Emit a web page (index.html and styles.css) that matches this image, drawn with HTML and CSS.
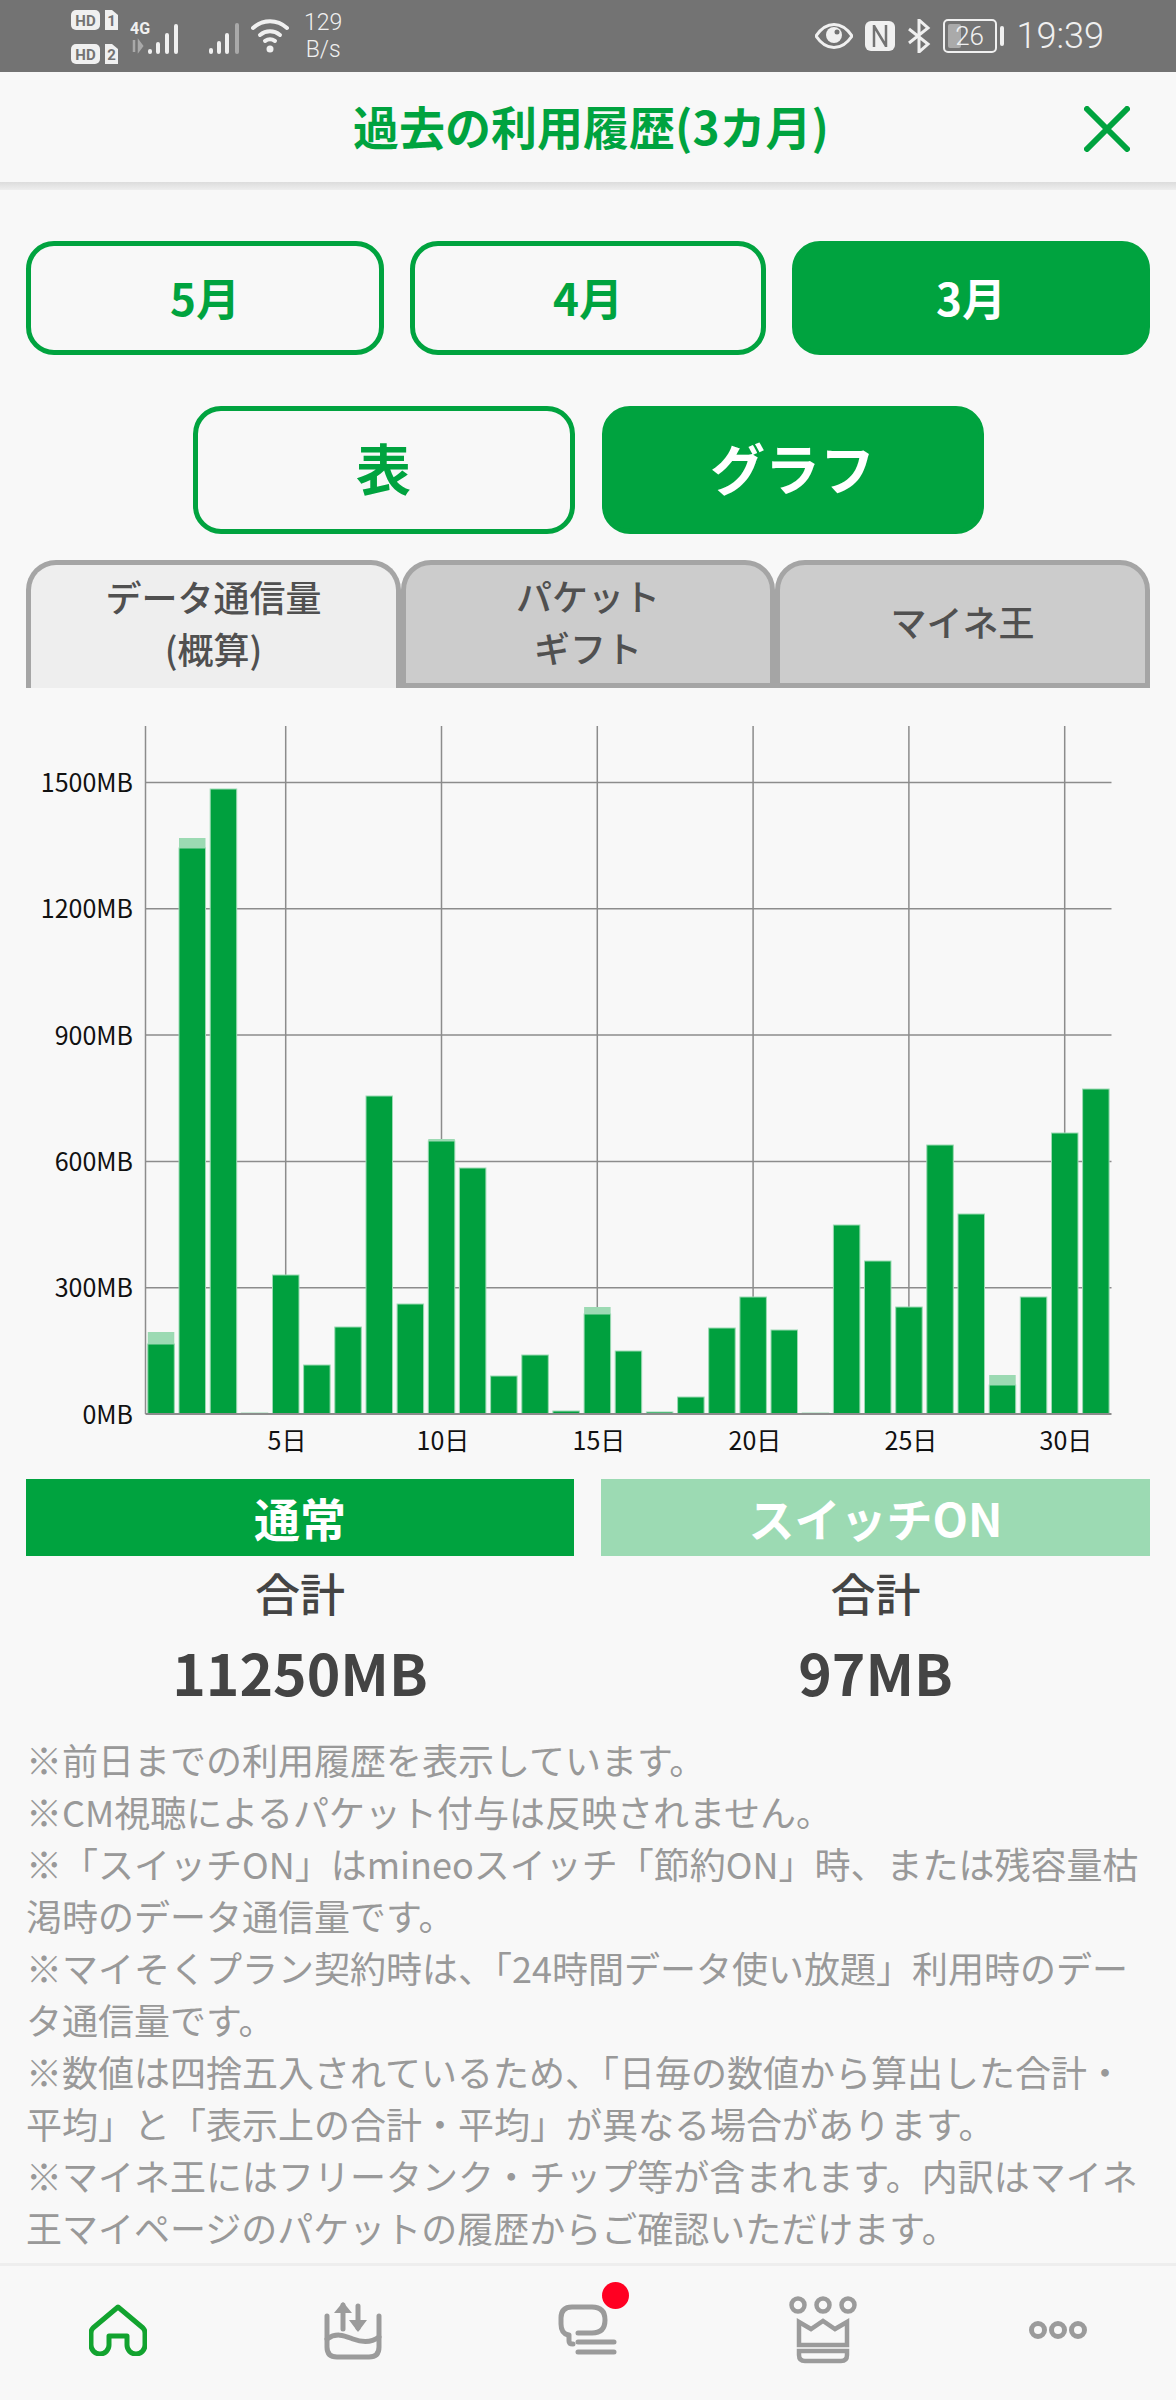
FILE: index.html
```html
<!DOCTYPE html>
<html lang="ja">
<head>
    <meta charset="UTF-8">
    <meta name="viewport" content="width=device-width, initial-scale=1.0">
    <title>過去の利用履歴(3カ月)</title>
    <link rel="stylesheet" href="styles.css">
</head>
<body>
    <div class="status-bar">
        <div class="status-left">
            <svg class="sim-icon" width="50" height="56" viewBox="0 0 50 56">
                <rect x="1" y="2" width="29" height="20" rx="5" fill="#f0f0f0"/>
                <path d="M35 2h7l6 5v15h-13z" fill="#f0f0f0"/>
                <text x="15.500" y="18" class="sim-text">HD</text>
                <text x="41.500" y="18" class="sim-text">1</text>
                <rect x="1" y="36" width="29" height="20" rx="5" fill="#f0f0f0"/>
                <path d="M35 36h7l6 5v15h-13z" fill="#f0f0f0"/>
                <text x="15.500" y="52" class="sim-text">HD</text>
                <text x="41.500" y="52" class="sim-text">2</text>
            </svg>
            <svg class="signal-icon" width="52" height="40" viewBox="0 0 52 40">
                <text x="0" y="18" class="net-text">4G</text>
                <path d="M4 24v12M9 26v8l3-4z" stroke="#a9a9a9" stroke-width="2.500" fill="none"/>
                <g stroke="#f0f0f0" stroke-width="4" stroke-linecap="round">
                    <path d="M20 36v-1M28 36v-8M37 36v-17M46 36v-26"/>
                </g>
            </svg>
            <svg class="signal-two" width="34" height="40" viewBox="0 0 34 40">
                <g stroke="#f0f0f0" stroke-width="4" stroke-linecap="round">
                    <path d="M3 36v-2M11 36v-9M19 36v-17"/>
                </g>
                <path d="M29 36v-27" stroke="#a9a9a9" stroke-width="4" stroke-linecap="round"/>
            </svg>
            <svg class="wifi-icon" width="38" height="36" viewBox="0 0 38 36">
                <g fill="none" stroke="#f0f0f0" stroke-width="4" stroke-linecap="round">
                    <path d="M2 10c10-9 24-9 34 0"/>
                    <path d="M9 17c6-5 14-5 20 0"/>
                    <path d="M14 23c3-2 7-2 10 0"/>
                </g>
                <circle cx="19" cy="31" r="3.500" fill="#f0f0f0"/>
            </svg>
            <div class="net-speed">129<br>B/s</div>
        </div>
        <div class="status-right">
            <svg width="38" height="26" viewBox="0 0 38 26">
                <path d="M1 13C7 4 13 1.500 19 1.500S31 4 37 13c-6 9-12 11.500-18 11.500S7 22 1 13z" fill="none" stroke="#f0f0f0" stroke-width="3"/>
                <circle cx="19" cy="12" r="8" fill="#f0f0f0"/>
                <circle cx="22" cy="9" r="2.500" fill="#737373"/>
            </svg>
            <svg width="30" height="32" viewBox="0 0 30 32">
                <rect x="0" y="1" width="30" height="30" rx="6" fill="#f0f0f0"/>
                <path d="M9 5v22M21 5v22M9 6l12 20" stroke="#737373" stroke-width="2.500" fill="none"/>
            </svg>
            <svg width="24" height="34" viewBox="0 0 24 34">
                <path d="M2 10l19 15-9 8V1l9 8L2 24" fill="none" stroke="#f0f0f0" stroke-width="3"/>
            </svg>
            <div class="battery">
                <div class="battery-body"><span class="battery-level"></span><span class="battery-num">26</span></div>
                <span class="battery-nub"></span>
            </div>
            <span class="clock">19:39</span>
        </div>
    </div>

    <header class="page-header">
        <h1>過去の利用履歴(3カ月)</h1>
        <svg class="close-icon" width="46" height="46" viewBox="0 0 46 46">
            <path d="M3 3l40 40M43 3L3 43" stroke="#00a33f" stroke-width="6" stroke-linecap="round" fill="none"/>
        </svg>
    </header>

    <main class="content">
        <div class="month-row">
            <button type="button" class="pill">5月</button>
            <button type="button" class="pill">4月</button>
            <button type="button" class="pill active">3月</button>
        </div>

        <div class="view-row">
            <button type="button" class="pill">表</button>
            <button type="button" class="pill active">グラフ</button>
        </div>

        <div class="tabs">
            <div class="tab current">データ通信量<br>(概算)</div>
            <div class="tab">パケット<br>ギフト</div>
            <div class="tab">マイネ王</div>
        </div>

        <svg class="chart" width="1176" height="740" viewBox="0 0 1176 740">
            <g class="grid">
                <path d="M145.500 6V694M285.700 6V694M441.500 6V694M597.300 6V694M753.100 6V694M908.900 6V694M1064.700 6V694"/>
                <path d="M145.500 62.500H1111.500M145.500 188.800H1111.500M145.500 315.100H1111.500M145.500 441.400H1111.500M145.500 567.700H1111.500"/>
            </g>
            <g class="bars-on">
                <rect x="147.800" y="612" width="26.500" height="82"/>
                <rect x="179" y="118" width="26.500" height="576"/>
                <rect x="428.300" y="419" width="26.500" height="275"/>
                <rect x="584.100" y="587" width="26.500" height="107"/>
                <rect x="989.200" y="655" width="26.500" height="39"/>
            </g>
            <g class="bars">
                <rect x="147.800" y="624" width="26.500" height="70"/>
                <rect x="179" y="128" width="26.500" height="566"/>
                <rect x="210.200" y="69" width="26.500" height="625"/>
                <rect x="241.300" y="693" width="26.500" height="1"/>
                <rect x="272.500" y="555" width="26.500" height="139"/>
                <rect x="303.600" y="645" width="26.500" height="49"/>
                <rect x="334.800" y="607" width="26.500" height="87"/>
                <rect x="366" y="376" width="26.500" height="318"/>
                <rect x="397.100" y="584" width="26.500" height="110"/>
                <rect x="428.300" y="421" width="26.500" height="273"/>
                <rect x="459.400" y="448" width="26.500" height="246"/>
                <rect x="490.600" y="656" width="26.500" height="38"/>
                <rect x="521.800" y="635" width="26.500" height="59"/>
                <rect x="552.900" y="691" width="26.500" height="3"/>
                <rect x="584.100" y="594" width="26.500" height="100"/>
                <rect x="615.200" y="631" width="26.500" height="63"/>
                <rect x="646.400" y="692" width="26.500" height="2"/>
                <rect x="677.600" y="677" width="26.500" height="17"/>
                <rect x="708.700" y="608" width="26.500" height="86"/>
                <rect x="739.900" y="577" width="26.500" height="117"/>
                <rect x="771" y="610" width="26.500" height="84"/>
                <rect x="802.200" y="693" width="26.500" height="1"/>
                <rect x="833.400" y="505" width="26.500" height="189"/>
                <rect x="864.500" y="541" width="26.500" height="153"/>
                <rect x="895.700" y="587" width="26.500" height="107"/>
                <rect x="926.800" y="425" width="26.500" height="269"/>
                <rect x="958" y="494" width="26.500" height="200"/>
                <rect x="989.200" y="665" width="26.500" height="29"/>
                <rect x="1020.300" y="577" width="26.500" height="117"/>
                <rect x="1051.500" y="413" width="26.500" height="281"/>
                <rect x="1082.600" y="369" width="26.500" height="325"/>
            </g>
            <path class="axis" d="M145.500 694H1111.500"/>
            <g class="y-labels">
                <text x="133" y="72">1500MB</text>
                <text x="133" y="198">1200MB</text>
                <text x="133" y="325">900MB</text>
                <text x="133" y="451">600MB</text>
                <text x="133" y="577">300MB</text>
                <text x="133" y="704">0MB</text>
            </g>
            <g class="x-labels">
                <text x="287" y="730">5日</text>
                <text x="443" y="730">10日</text>
                <text x="599" y="730">15日</text>
                <text x="755" y="730">20日</text>
                <text x="911" y="730">25日</text>
                <text x="1066" y="730">30日</text>
            </g>
        </svg>

        <div class="totals">
            <div class="total">
                <div class="total-label">通常</div>
                <div class="total-name">合計</div>
                <div class="total-value">11250MB</div>
            </div>
            <div class="total switch-on">
                <div class="total-label">スイッチON</div>
                <div class="total-name">合計</div>
                <div class="total-value">97MB</div>
            </div>
        </div>

        <p class="notes">
            ※前日までの利用履歴を表示しています。<br>
            ※CM視聴によるパケット付与は反映されません。<br>
            ※「スイッチON」はmineoスイッチ「節約ON」時、または残容量枯渇時のデータ通信量です。<br>
            ※マイそくプラン契約時は、「24時間データ使い放題」利用時のデータ通信量です。<br>
            ※数値は四捨五入されているため、「日毎の数値から算出した合計・平均」と「表示上の合計・平均」が異なる場合があります。<br>
            ※マイネ王にはフリータンク・チップ等が含まれます。内訳はマイネ王マイページのパケットの履歴からご確認いただけます。
        </p>
    </main>

    <nav class="bottom-nav">
        <a class="nav-item">
            <svg width="58" height="52" viewBox="0 0 58 52">
                <path d="M29 3L54 24Q56 26 56 29V41A9 9 0 0 1 38 41V32H20V41A9 9 0 0 1 2 41V29Q2 26 4 24Z" fill="none" stroke="#12a32f" stroke-width="5" stroke-linejoin="round"/>
            </svg>
        </a>
        <a class="nav-item">
            <svg width="58" height="60" viewBox="0 0 58 60">
                <g fill="none" stroke="#9b9b9b" stroke-width="5" stroke-linecap="round">
                    <path d="M3 16V47Q3 57 13 57H45Q55 57 55 47V16"/>
                    <path d="M3 39C13 32 21 36 29 39S47 43 55 37"/>
                    <path d="M19 29V5M34 6V28"/>
                </g>
                <path d="M10 13L19 2L28 13ZM25 20H43L34 32Z" fill="#9b9b9b"/>
            </svg>
        </a>
        <a class="nav-item chat">
            <svg width="60" height="52" viewBox="0 0 60 52">
                <g fill="none" stroke="#9b9b9b" stroke-width="5" stroke-linecap="round">
                    <path d="M10 31Q3 29 3 20V14Q3 3 14 3H34Q47 3 47 16Q47 29 34 29H20"/>
                    <path d="M20 38H56M20 48H56"/>
                    <path d="M11 31V37Q11 40 15 40"/>
                </g>
            </svg>
            <span class="badge"></span>
        </a>
        <a class="nav-item">
            <svg width="68" height="68" viewBox="0 0 68 68">
                <g fill="none" stroke="#9b9b9b" stroke-width="4.500">
                    <circle cx="9" cy="9" r="6.500"/>
                    <circle cx="34" cy="9" r="6.500"/>
                    <circle cx="59" cy="9" r="6.500"/>
                    <path d="M10 26L22 33L34 25L46 33L58 26V49H10Z"/>
                    <path d="M10 55H58V59Q58 65 52 65H16Q10 65 10 59Z"/>
                </g>
            </svg>
        </a>
        <a class="nav-item">
            <svg width="60" height="20" viewBox="0 0 60 20">
                <g fill="none" stroke="#9b9b9b" stroke-width="5">
                    <circle cx="10" cy="10" r="6.500"/>
                    <circle cx="30" cy="10" r="6.500"/>
                    <circle cx="50" cy="10" r="6.500"/>
                </g>
            </svg>
        </a>
    </nav>
</body>
</html>
```

FILE: styles.css
```css
* {
    box-sizing: border-box;
}

body {
    font-family: "Noto Sans CJK JP", "Noto Sans", sans-serif;
    background-color: #f8f8f8;
    color: #444;
    width: 1176px;
    height: 2400px;
    margin: 0;
    display: flex;
    flex-direction: column;
    overflow: hidden;
}

/* status bar */
.status-bar {
    height: 72px;
    background-color: #737373;
    color: #f0f0f0;
    display: flex;
    justify-content: space-between;
    align-items: center;
    padding: 0 72px 0 70px;
    flex-shrink: 0;
}

.status-left, .status-right {
    display: flex;
    align-items: center;
}

.sim-text {
    font-family: "Roboto", sans-serif;
    font-size: 15px;
    font-weight: 700;
    fill: #737373;
    text-anchor: middle;
}

.net-text {
    font-family: "Roboto", sans-serif;
    font-size: 16px;
    font-weight: 700;
    fill: #f0f0f0;
}

.sim-icon {
    margin-right: 10px;
}

.signal-two {
    margin-left: 26px;
}

.wifi-icon {
    margin-left: 9px;
}

.net-speed {
    font-family: "Roboto", sans-serif;
    font-size: 23px;
    font-weight: 300;
    line-height: 27px;
    text-align: center;
    margin-left: 15px;
}

.status-right {
    gap: 12px;
}

.battery {
    display: flex;
    align-items: center;
    gap: 3px;
}

.battery-body {
    position: relative;
    width: 54px;
    height: 34px;
    border: 2px solid #f0f0f0;
    border-radius: 5px;
    padding: 3px;
    display: flex;
}

.battery-level {
    width: 13px;
    background-color: #aaa;
    border-radius: 2px;
}

.battery-num {
    position: absolute;
    left: 0;
    right: 0;
    top: 0;
    text-align: center;
    font-family: "Roboto", sans-serif;
    font-size: 26px;
    font-weight: 300;
    line-height: 30px;
}

.battery-nub {
    width: 4px;
    height: 20px;
    background-color: #f0f0f0;
    border-radius: 2px;
}

.clock {
    font-family: "Roboto", sans-serif;
    font-size: 36px;
    font-weight: 300;
    margin-left: 1px;
}

/* header */
.page-header {
    position: relative;
    height: 110px;
    background-color: #f8f8f8;
    display: flex;
    justify-content: center;
    align-items: center;
    padding: 0 0 5px 6px;
    flex-shrink: 0;
}

.page-header::after {
    content: "";
    position: absolute;
    left: 0;
    right: 0;
    top: 100%;
    height: 8px;
    background: linear-gradient(#dcdcdc, #eee);
}

.page-header h1 {
    margin: 0;
    color: #00a33f;
    font-size: 46px;
    font-weight: 700;
}

.close-icon {
    position: absolute;
    right: 46px;
    top: 34px;
}

/* main */
.content {
    flex: 1;
    padding-top: 59px;
    min-height: 0;
    overflow: hidden;
}

.pill {
    font-family: inherit;
    font-weight: 700;
    color: #00a33f;
    background-color: #f8f8f8;
    border: 5px solid #00a33f;
    border-radius: 28px;
    padding: 0 0 3px;
}

.pill.active {
    color: #fff;
    background-color: #00a33f;
}

.month-row {
    display: grid;
    grid-template-columns: 358px 356px 358px;
    gap: 26px;
    padding: 0 26px;
}

.month-row .pill {
    height: 114px;
    font-size: 44px;
}

.view-row {
    display: flex;
    justify-content: center;
    gap: 27px;
    margin-top: 51px;
}

.view-row .pill {
    width: 382px;
    height: 128px;
    font-size: 55px;
    padding-bottom: 8px;
}

.tabs {
    display: grid;
    grid-template-columns: 375px 374px 375px;
    margin: 26px 26px 0;
}

.tab {
    height: 128px;
    background-color: #ccc;
    border: 5px solid #a5a5a5;
    border-radius: 30px 30px 0 0;
    padding-bottom: 6px;
    font-size: 36px;
    font-weight: 500;
    line-height: 52px;
    text-align: center;
    display: flex;
    align-items: center;
    justify-content: center;
    color: #505050;
}

.tab.current {
    background-color: #eee;
    border-bottom: none;
    padding-bottom: 9px;
}

/* chart */
.chart {
    display: block;
    margin-top: 32px;
}

.grid path {
    fill: none;
    stroke: #8c8c8c;
    stroke-width: 1.500;
}

.axis {
    fill: none;
    stroke: #8c8c8c;
    stroke-width: 2;
}

.bars rect {
    fill: #00a03e;
    stroke: #9cdab3;
    stroke-width: 1;
}

.bars-on rect {
    fill: #9cdab3;
}

.y-labels text, .x-labels text {
    font-size: 25px;
    fill: #111;
}

.y-labels text {
    text-anchor: end;
}

.x-labels text {
    text-anchor: middle;
}

/* totals */
.totals {
    display: grid;
    grid-template-columns: 548px 549px;
    gap: 27px;
    margin: 19px 26px 0;
    text-align: center;
}

.total-label {
    height: 77px;
    line-height: 77px;
    background-color: #00a33f;
    color: #fff;
    font-size: 46px;
    font-weight: 700;
}

.switch-on .total-label {
    background-color: #9cdab3;
}

.total-name {
    font-size: 45px;
    font-weight: 500;
    line-height: 64px;
    margin-top: 5px;
}

.total-value {
    font-size: 57px;
    font-weight: 700;
    line-height: 80px;
    margin-top: 6px;
}

.notes {
    margin: 22px 26px 0;
    color: #999;
    font-size: 36px;
    line-height: 52px;
}

/* bottom nav */
.bottom-nav {
    height: 137px;
    border-top: 3px solid #eee;
    background-color: #f8f8f8;
    display: grid;
    grid-template-columns: repeat(5, 1fr);
    padding-bottom: 6px;
    flex-shrink: 0;
}

.nav-item {
    position: relative;
    display: flex;
    justify-content: center;
    align-items: center;
}

.badge {
    position: absolute;
    left: 132px;
    top: 16px;
    width: 27px;
    height: 27px;
    background-color: #ff0022;
    border-radius: 50%;
}
```
